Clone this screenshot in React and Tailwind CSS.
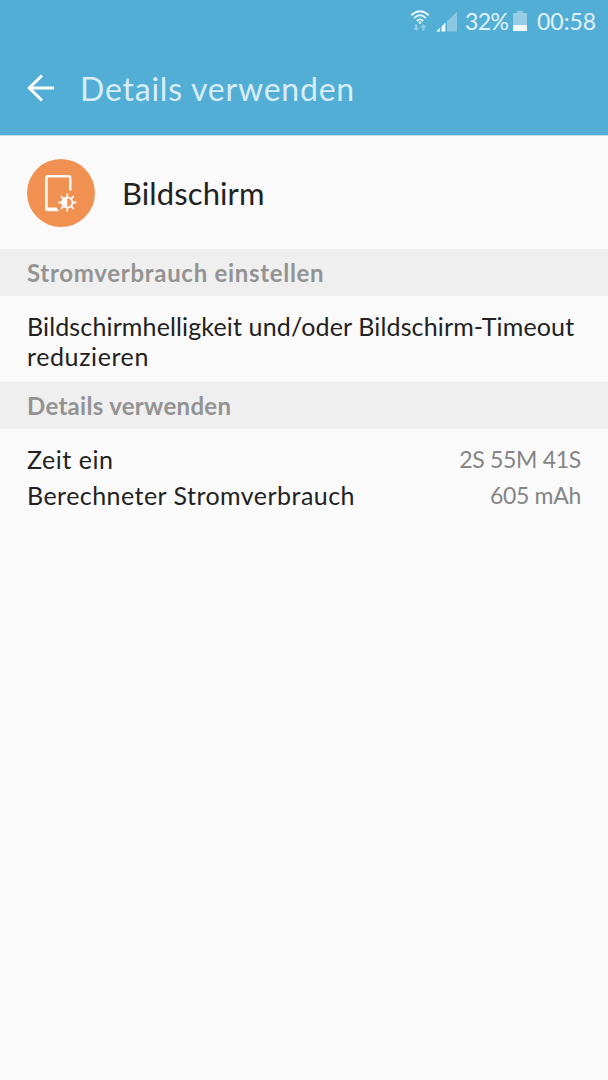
const usage = [
  { label: 'Zeit ein', value: '2S 55M 41S', labelClass: 'tracking-[0.55px]', valueClass: 'tracking-[-0.3px]' },
  { label: 'Berechneter Stromverbrauch', value: '605 mAh', labelClass: 'tracking-[0.46px]', valueClass: 'tracking-[-0.3px]' },
];

const WifiIcon = () => (
  <svg viewBox="0 0 20 22" className="h-[22px] w-5" fill="none">
    <g stroke="#e4f2f9" strokeWidth="1.9">
      <path d="M1.2 5.2Q10-2.8 18.8 5.2" />
      <path d="M4.1 8.1Q10 2.5 15.9 8.1" />
      <path d="M6.8 11Q10 7.8 13.2 11" />
    </g>
    <path d="M8.1 12.2Q10 10.8 11.9 12.2L10 14.4z" fill="#e4f2f9" />
    <g fill="#96cde5">
      <path d="M5.2 14.5h2v3.200h2L6.200 21l-3-3.300h2z" />
      <path d="M12.400 20.800h2v-3.200h2l-3-3.300-3 3.300h2z" />
    </g>
  </svg>
);

const SignalIcon = () => (
  <svg viewBox="0 0 22 21" className="h-[21px] w-[22px]">
    <path d="M0 20.5L4 16.8v3.7z" fill="#eef7fb" />
    <path d="M5.400 20.5v-4.7L9.4 11.6v8.9z" fill="#eef7fb" />
    <path d="M11 20.5V10.3L21 .8v19.7z" fill="#8ac7e1" />
  </svg>
);

const BatteryIcon = () => (
  <svg viewBox="0 0 14 20" className="h-5 w-3.5">
    <path d="M4 0h6v2h4v12H0V2h4z" fill="#97cde4" />
    <path d="M0 14h14v6H0z" fill="#f1f9fc" />
  </svg>
);

const BackIcon = () => (
  <svg viewBox="0 0 28 28" className="h-7 w-7" fill="none" stroke="#fff" strokeWidth="3">
    <path d="M15 1.5L2.3 14 15 26.5M2.3 14H27" />
  </svg>
);

const DisplayIcon = () => (
  <svg viewBox="0 0 68 68" className="size-[68px]" fill="none">
    <circle cx="34" cy="34" r="34" fill="#f09152" />
    <path
      d="M18 19a3 3 0 0 1 3-3h20.500a3 3 0 0 1 3 3v12.500h-2.500V18.600H20.700V48.500h8.800l2.600 3.700H21a3 3 0 0 1-3-3z"
      fill="#fffaf6"
    />
    <circle cx="40.300" cy="43.500" r="5.200" stroke="#fffaf6" strokeWidth="1.800" />
    <path d="M40.300 38.300a5.200 5.200 0 0 0 0 10.400z" fill="#fffaf6" />
    <path
      d="M40.300 34.500v3.500M40.300 49v3.500M31.300 43.500h3.500M45.800 43.500h3.500M33.900 37.100l2.500 2.500M44.200 47.400l2.500 2.500M33.900 49.900l2.500-2.500M44.200 39.600l2.500-2.500"
      stroke="#fffaf6"
      strokeWidth="1.800"
    />
  </svg>
);

const SectionTitle = ({ children, className }) => (
  <h2 className={`h-[47px] bg-[#efefef] pl-[27px] text-[24px] leading-[48px] font-bold text-[#939393] ${className}`}>
    {children}
  </h2>
);

export default function App() {
  return (
    <div className="min-h-screen w-full bg-[#fafafa] font-['Lato',sans-serif] text-[#222] whitespace-nowrap">
      <header className="h-[136px] border-b border-[#c9dce4] bg-[#52aed5]">
        {/* Status bar */}
        <div className="flex h-[42px] items-center justify-end pr-3 text-[#e0f1f8]">
          <WifiIcon />
          <span className="ml-[6px]"><SignalIcon /></span>
          <span className="ml-[7px] w-[43px] text-[23px] leading-[42px] tracking-[-0.6px]">32%</span>
          <span className="ml-[5px]"><BatteryIcon /></span>
          <span className="ml-[10px] w-[59px] text-[23px] leading-[42px] tracking-[0px]">00:58</span>
        </div>

        {/* Title bar */}
        <div className="flex h-[92px] items-center pl-[27px]">
          <BackIcon />
          <h1 className="ml-[25px] pt-0.5 text-[32px] leading-10 tracking-[0.78px] text-[#d8edf6]">Details verwenden</h1>
        </div>
      </header>

      <main>
        <div className="flex h-[113px] items-center pl-[27px]">
          <DisplayIcon />
          <span className="ml-[27px] text-[31px] leading-10 tracking-[0.1px]">Bildschirm</span>
        </div>

        <SectionTitle className="tracking-[0.7px]">Stromverbrauch einstellen</SectionTitle>
        <p className="h-[86px] pt-[15px] pl-[27px] text-[25px] leading-[30px]">
          <span className="block tracking-[0.14px]">Bildschirmhelligkeit und/oder Bildschirm-Timeout</span>
          <span className="block tracking-[0.6px]">reduzieren</span>
        </p>

        <SectionTitle className="tracking-[0.3px]">Details verwenden</SectionTitle>
        <dl className="px-[27px] pt-3 text-[25px] leading-9">
          {usage.map((row) => (
            <div key={row.label} className="flex justify-between">
              <dt className={row.labelClass}>{row.label}</dt>
              <dd className={`text-[23px] text-[#858585] ${row.valueClass}`}>{row.value}</dd>
            </div>
          ))}
        </dl>
      </main>
    </div>
  );
}
